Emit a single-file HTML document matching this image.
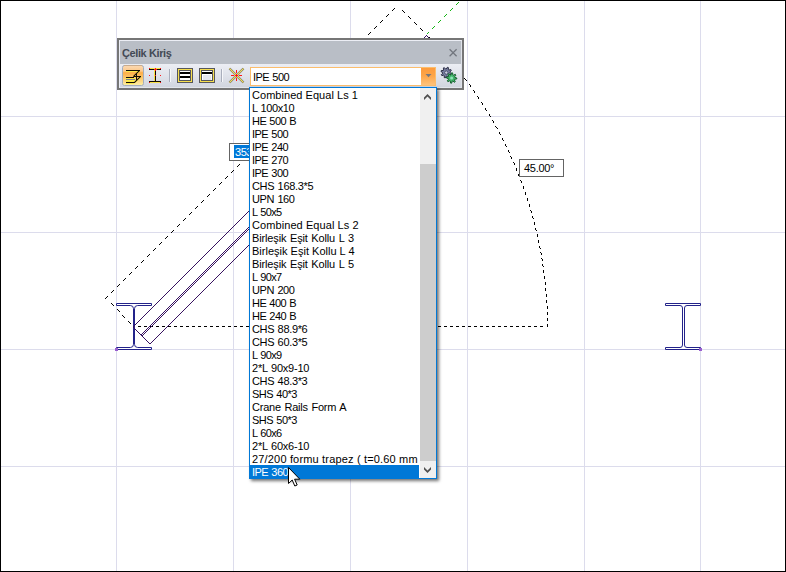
<!DOCTYPE html>
<html><head><meta charset="utf-8"><title>Çelik Kiriş</title>
<style>
html,body{margin:0;padding:0;background:#fff;}
body{width:786px;height:572px;position:relative;overflow:hidden;font-family:"Liberation Sans",sans-serif;font-size:11px;color:#000;}
.cv{position:absolute;left:0;top:0;}
.frame{position:absolute;left:0;top:0;width:784px;height:570px;border:1px solid #000;pointer-events:none;}
.lbl{position:absolute;box-sizing:border-box;height:18px;border:1px solid #646464;background:#fff;line-height:16px;white-space:pre;}
.tb{position:absolute;left:117px;top:38px;width:343px;height:48px;border:2px solid #767676;background:#b9bec6;}
.tb .title{position:absolute;left:0;top:0;width:343px;height:24px;background:#b9bec6;}
.tb .title span{position:absolute;left:3px;top:7px;font-weight:bold;color:#444a55;line-height:13px;letter-spacing:-0.4px}
.tb .row{position:absolute;left:0;top:24px;width:343px;height:24px;background:linear-gradient(#eceef4,#dfe2ea 50%,#d0d4de);}
.tb .inner{position:absolute;left:0;top:0;width:341px;height:46px;border:1px solid;border-color:#eceef5 #dfe2e9 #e3e6ec #eceef5;}
.combo{position:absolute;left:250px;top:67px;width:186px;height:19px;box-sizing:border-box;border:1px solid #fbbd6c;background:#fff;}
.combo span{position:absolute;left:2px;top:3px;line-height:13px;letter-spacing:-0.53px;word-spacing:0.7px}
.combo .arr{position:absolute;right:0;top:0;width:14px;height:17px;background:linear-gradient(#fd9b3c,#fda548 45%,#fec27a);}
.list{position:absolute;left:249px;top:87px;width:186px;height:390px;border:1px solid #0078d7;background:#fff;box-shadow:2px 2px 3px rgba(0,0,0,.55);}
.list .it div{height:13px;line-height:15px;padding-left:2px;white-space:pre;width:169px;box-sizing:border-box;overflow:hidden}
.list .it .sel{background:#0078d7;color:#fff;}
.sb{position:absolute;right:0;top:0;width:16px;height:390px;background:#f0f0f0;}
.sb .th{position:absolute;left:0;top:76px;width:16px;height:297px;background:#cdcdcd;}
</style></head><body>
<svg class="cv" width="786" height="572" viewBox="0 0 786 572"><g fill="#dcdcec"><rect x="116" y="0" width="1" height="572"/><rect x="233" y="0" width="1" height="572"/><rect x="350" y="0" width="1" height="572"/><rect x="467" y="0" width="1" height="572"/><rect x="584" y="0" width="1" height="572"/><rect x="700" y="0" width="1" height="572"/><rect x="0" y="116" width="786" height="1"/><rect x="0" y="232" width="786" height="1"/><rect x="0" y="349" width="786" height="1"/><rect x="0" y="466" width="786" height="1"/></g><path d="M105 298h1v1h-1zM106 297h1v1h-1zM107 296h1v1h-1zM111 292h1v1h-1zM111 303h1v1h-1zM112 291h1v1h-1zM112 304h1v1h-1zM113 290h1v1h-1zM113 305h1v1h-1zM117 286h1v1h-1zM117 309h1v1h-1zM118 285h1v1h-1zM118 310h1v1h-1zM119 284h1v1h-1zM119 311h1v1h-1zM122 315h1v1h-1zM123 280h1v1h-1zM123 316h1v1h-1zM124 279h1v1h-1zM124 317h1v1h-1zM125 278h1v1h-1zM128 321h1v1h-1zM129 274h1v1h-1zM129 322h1v1h-1zM130 273h1v1h-1zM130 323h1v1h-1zM131 272h1v1h-1zM134 326h1v1h-1zM135 268h1v1h-1zM136 267h1v1h-1zM137 266h1v1h-1zM138 326h3v1h-3zM141 262h1v1h-1zM142 261h1v1h-1zM143 260h1v1h-1zM144 326h3v1h-3zM147 256h1v1h-1zM148 255h1v1h-1zM149 254h1v1h-1zM150 326h3v1h-3zM153 250h1v1h-1zM154 249h1v1h-1zM155 248h1v1h-1zM156 326h3v1h-3zM159 244h1v1h-1zM160 243h1v1h-1zM161 242h1v1h-1zM162 326h3v1h-3zM165 238h1v1h-1zM166 237h1v1h-1zM167 236h1v1h-1zM168 326h3v1h-3zM171 232h1v1h-1zM172 231h1v1h-1zM173 230h1v1h-1zM174 326h3v1h-3zM177 226h1v1h-1zM178 225h1v1h-1zM179 224h1v1h-1zM180 326h3v1h-3zM183 220h1v1h-1zM184 219h1v1h-1zM185 218h1v1h-1zM186 326h3v1h-3zM189 214h1v1h-1zM190 213h1v1h-1zM191 212h1v1h-1zM192 326h3v1h-3zM195 208h1v1h-1zM196 207h1v1h-1zM197 206h1v1h-1zM198 326h3v1h-3zM201 202h1v1h-1zM202 201h1v1h-1zM203 200h1v1h-1zM204 326h3v1h-3zM207 196h1v1h-1zM208 195h1v1h-1zM209 194h1v1h-1zM210 326h3v1h-3zM213 190h1v1h-1zM214 189h1v1h-1zM215 188h1v1h-1zM216 326h3v1h-3zM219 184h1v1h-1zM220 183h1v1h-1zM221 182h1v1h-1zM222 326h3v1h-3zM225 178h1v1h-1zM226 177h1v1h-1zM227 176h1v1h-1zM228 326h3v1h-3zM231 172h1v1h-1zM232 171h1v1h-1zM233 170h1v1h-1zM234 326h3v1h-3zM237 166h1v1h-1zM238 165h1v1h-1zM239 164h1v1h-1zM240 326h3v1h-3zM243 160h1v1h-1zM244 159h1v1h-1zM245 158h1v1h-1zM246 326h3v1h-3zM249 154h1v1h-1zM250 153h1v1h-1zM251 152h1v1h-1zM252 326h3v1h-3zM255 148h1v1h-1zM256 147h1v1h-1zM257 146h1v1h-1zM258 326h3v1h-3zM261 142h1v1h-1zM262 141h1v1h-1zM263 140h1v1h-1zM264 326h3v1h-3zM267 136h1v1h-1zM268 135h1v1h-1zM269 134h1v1h-1zM270 326h3v1h-3zM273 130h1v1h-1zM274 129h1v1h-1zM275 128h1v1h-1zM276 326h3v1h-3zM279 124h1v1h-1zM280 123h1v1h-1zM281 122h1v1h-1zM282 326h3v1h-3zM285 118h1v1h-1zM286 117h1v1h-1zM287 116h1v1h-1zM288 326h3v1h-3zM291 112h1v1h-1zM292 111h1v1h-1zM293 110h1v1h-1zM294 326h3v1h-3zM297 106h1v1h-1zM298 105h1v1h-1zM299 104h1v1h-1zM300 326h3v1h-3zM302 100h1v1h-1zM303 99h1v1h-1zM304 98h1v1h-1zM306 326h3v1h-3zM308 94h1v1h-1zM309 93h1v1h-1zM310 92h1v1h-1zM312 326h3v1h-3zM314 88h1v1h-1zM315 87h1v1h-1zM316 86h1v1h-1zM318 326h3v1h-3zM320 82h1v1h-1zM321 81h1v1h-1zM322 80h1v1h-1zM324 326h3v1h-3zM326 76h1v1h-1zM327 75h1v1h-1zM328 74h1v1h-1zM330 326h3v1h-3zM332 70h1v1h-1zM333 69h1v1h-1zM334 68h1v1h-1zM336 326h3v1h-3zM338 64h1v1h-1zM339 63h1v1h-1zM340 62h1v1h-1zM342 326h3v1h-3zM344 58h1v1h-1zM345 57h1v1h-1zM346 56h1v1h-1zM348 326h3v1h-3zM350 52h1v1h-1zM351 51h1v1h-1zM352 50h1v1h-1zM354 326h3v1h-3zM356 46h1v1h-1zM357 45h1v1h-1zM358 44h1v1h-1zM360 326h3v1h-3zM362 40h1v1h-1zM363 39h1v1h-1zM364 38h1v1h-1zM366 326h3v1h-3zM368 34h1v1h-1zM369 33h1v1h-1zM370 32h1v1h-1zM372 326h3v1h-3zM374 28h1v1h-1zM375 27h1v1h-1zM376 26h1v1h-1zM378 326h3v1h-3zM380 22h1v1h-1zM381 21h1v1h-1zM382 20h1v1h-1zM384 326h3v1h-3zM386 16h1v1h-1zM387 15h1v1h-1zM388 14h1v1h-1zM390 326h3v1h-3zM392 10h1v1h-1zM393 9h1v1h-1zM394 8h1v1h-1zM396 326h3v1h-3zM402 10h1v1h-1zM402 326h3v1h-3zM403 11h1v1h-1zM404 12h1v1h-1zM408 16h1v1h-1zM408 326h3v1h-3zM409 17h1v1h-1zM410 18h1v1h-1zM414 22h1v1h-1zM414 326h3v1h-3zM415 23h1v1h-1zM416 24h1v1h-1zM420 28h1v1h-1zM420 326h3v1h-3zM421 29h1v1h-1zM422 30h1v1h-1zM426 326h3v1h-3zM429 37h1v1h-1zM430 38h1v1h-1zM432 326h3v1h-3zM434 42h1v1h-1zM435 43h1v1h-1zM436 44h1v1h-1zM438 326h3v1h-3zM440 48h1v1h-1zM441 49h1v2h-1zM444 326h3v1h-3zM445 54h1v1h-1zM446 55h1v1h-1zM447 56h1v1h-1zM450 60h1v1h-1zM450 326h3v1h-3zM451 61h1v1h-1zM452 62h1v1h-1zM455 66h1v1h-1zM456 67h1v1h-1zM456 326h3v1h-3zM457 68h1v1h-1zM460 72h1v1h-1zM461 73h1v2h-1zM462 326h3v1h-3zM464 78h1v1h-1zM465 79h1v1h-1zM466 80h1v1h-1zM468 326h3v1h-3zM469 84h1v1h-1zM470 85h1v2h-1zM473 90h1v1h-1zM474 91h1v2h-1zM474 326h3v1h-3zM477 96h1v1h-1zM478 97h1v2h-1zM480 326h3v1h-3zM481 102h1v1h-1zM482 103h1v2h-1zM485 108h1v2h-1zM486 110h1v1h-1zM486 326h3v1h-3zM489 114h1v2h-1zM490 116h1v1h-1zM492 120h1v1h-1zM492 326h3v1h-3zM493 121h1v2h-1zM495 126h1v1h-1zM496 127h1v1h-1zM497 128h1v1h-1zM498 326h3v1h-3zM499 132h1v2h-1zM500 134h1v1h-1zM502 138h1v2h-1zM503 140h1v1h-1zM504 326h3v1h-3zM505 144h1v2h-1zM506 146h1v1h-1zM508 150h1v2h-1zM509 152h1v1h-1zM510 156h1v1h-1zM510 326h3v1h-3zM511 157h1v2h-1zM513 162h1v1h-1zM514 163h1v2h-1zM516 168h1v3h-1zM516 326h3v1h-3zM518 174h1v2h-1zM519 176h1v1h-1zM520 180h1v1h-1zM521 181h1v2h-1zM522 326h3v1h-3zM523 186h1v3h-1zM525 192h1v3h-1zM527 198h1v3h-1zM528 326h3v1h-3zM529 204h1v3h-1zM530 210h1v1h-1zM531 211h1v2h-1zM532 216h1v2h-1zM533 218h1v1h-1zM534 222h1v3h-1zM534 326h3v1h-3zM535 228h1v2h-1zM536 230h1v1h-1zM537 234h1v3h-1zM538 240h1v3h-1zM539 246h1v2h-1zM540 248h1v1h-1zM540 252h1v1h-1zM540 326h3v1h-3zM541 253h1v2h-1zM541 258h1v1h-1zM542 259h1v2h-1zM542 264h1v2h-1zM543 266h1v1h-1zM543 270h1v3h-1zM544 276h1v3h-1zM545 282h1v3h-1zM545 288h1v3h-1zM546 294h1v3h-1zM546 300h1v3h-1zM547 306h1v3h-1zM547 312h1v3h-1zM547 318h1v3h-1zM547 324h1v3h-1z" fill="#000" shape-rendering="crispEdges"/><path d="M427 33h1v1h-1zM428 32h1v1h-1zM432 28h1v1h-1zM433 27h1v1h-1zM434 26h1v1h-1zM438 22h1v1h-1zM439 21h1v1h-1zM440 20h1v1h-1zM444 16h1v1h-1zM445 15h1v1h-1zM446 14h1v1h-1zM450 10h1v1h-1zM451 9h1v1h-1zM452 8h1v1h-1zM456 4h1v1h-1zM457 3h1v1h-1zM458 2h1v1h-1z" fill="#14b414" shape-rendering="crispEdges"/><path d="M116.5 303.5 H151.5 V305.5 H137.7 Q134.5 305.5 134.5 308.7 V344.3 Q134.5 347.5 137.7 347.5 H151.5 V349.5 H116.5 V347.5 H130.3 Q133.5 347.5 133.5 344.3 V308.7 Q133.5 305.5 130.3 305.5 H116.5 Z" fill="#fff" stroke="#23238a" stroke-width="1"/><path d="M665.5 303.5 H700.5 V305.5 H687.0 Q684.5 305.5 684.5 308.0 V345.0 Q684.5 347.5 687.0 347.5 H700.5 V349.5 H665.5 V347.5 H680.0 Q682.5 347.5 682.5 345.0 V308.0 Q682.5 305.5 680.0 305.5 H665.5 Z" fill="#fff" stroke="#23238a" stroke-width="1"/><rect x="115" y="348" width="3" height="3" fill="#9a5fd0"/><rect x="699" y="348" width="3" height="3" fill="#9a5fd0"/><g fill="none" stroke="#35105c" stroke-width="0.7" shape-rendering="crispEdges"><path d="M133.5 326.5 L300.5 159.5 M301.5 159.5 L426.5 34.5 M150.5 343.5 L317.5 176.5 M318.5 176.5 L443.5 51.5 M141.5 334.5 L308.5 167.5 M309.5 167.5 L434.5 42.5 M142.5 335.5 L309.5 168.5 M310.5 168.5 L435.5 43.5 M133.50 326.50 L150.50 343.50 M426.50 34.50 L443.50 51.50"/><path d="M133.5 326.5 L300.5 159.5 M301.5 159.5 L426.5 34.5 M150.5 343.5 L317.5 176.5 M318.5 176.5 L443.5 51.5 M141.5 334.5 L308.5 167.5 M309.5 167.5 L434.5 42.5 M142.5 335.5 L309.5 168.5 M310.5 168.5 L435.5 43.5 M133.50 326.50 L150.50 343.50 M426.50 34.50 L443.50 51.50"/><path d="M133.5 326.5 L300.5 159.5 M301.5 159.5 L426.5 34.5 M150.5 343.5 L317.5 176.5 M318.5 176.5 L443.5 51.5 M141.5 334.5 L308.5 167.5 M309.5 167.5 L434.5 42.5 M142.5 335.5 L309.5 168.5 M310.5 168.5 L435.5 43.5 M133.50 326.50 L150.50 343.50 M426.50 34.50 L443.50 51.50"/><path d="M133.5 326.5 L300.5 159.5 M301.5 159.5 L426.5 34.5 M150.5 343.5 L317.5 176.5 M318.5 176.5 L443.5 51.5 M141.5 334.5 L308.5 167.5 M309.5 167.5 L434.5 42.5 M142.5 335.5 L309.5 168.5 M310.5 168.5 L435.5 43.5 M133.50 326.50 L150.50 343.50 M426.50 34.50 L443.50 51.50"/></g></svg>
<div class="lbl" style="left:229px;top:143px;width:40px;"><span style="position:absolute;left:4px;top:1px;height:13px;line-height:15px;background:#0078d7;color:#fff;padding:0 1px;letter-spacing:-0.45px">353.55</span></div>
<div class="lbl" style="left:519px;top:159px;width:45px;"><span style="position:absolute;left:4px;top:0px;letter-spacing:-0.3px">45.00°</span></div>
<div class="tb">
 <div class="title"><span>Çelik Kiriş</span>
 <svg style="position:absolute;left:328px;top:7px" width="12" height="12" viewBox="0 0 12 12"><path d="M2.6 2.2 L9.6 9.2 M9.6 2.2 L2.6 9.2" stroke="#72767e" stroke-width="1.25" fill="none"/></svg>
 </div>
 <div class="row"></div><div class="inner"></div>
</div>
<svg style="position:absolute;left:119px;top:64px" width="343" height="24" viewBox="119 64 343 24"><defs><linearGradient id="ab" x1="0" y1="0" x2="0" y2="1"><stop offset="0" stop-color="#fbdab4"/><stop offset="0.28" stop-color="#fcc88c"/><stop offset="0.36" stop-color="#fdae48"/><stop offset="0.6" stop-color="#fdc468"/><stop offset="1" stop-color="#fdf0a8"/></linearGradient></defs><rect x="122.5" y="65.5" width="21" height="20" rx="2" fill="url(#ab)" stroke="#a3adbd"/><path d="M124 65.5H142" stroke="#c7ab8e" fill="none"/><g fill="none" stroke="#fbe84a" stroke-width="1"><path d="M126 71.5H138 M126 78.5H136 M126 80.5H135 M126 81.5H134 M126 83.5H134 M139.5 71.5L134 77 M140.5 77.5L135 83" shape-rendering="crispEdges"/></g><g fill="none" stroke="#7d8494" stroke-width="1" shape-rendering="crispEdges"><path d="M126 79.5H135"/></g><g fill="none" stroke="#120c04" stroke-width="1"><path d="M126 70.5H140 M126 77.5H134 M134 76.5H141 M126 82.5H135 M136.5 74V80" shape-rendering="crispEdges"/><path d="M139.7 70.3L133.3 76.7 M140.7 76.3L134.3 82.7" stroke-width="1.1"/></g><g shape-rendering="crispEdges"><rect x="149" y="68" width="12" height="1" fill="#f7e24a"/><rect x="149" y="82" width="12" height="1" fill="#f7e24a"/><rect x="154" y="70" width="1" height="11" fill="#f7e24a"/><rect x="149" y="69" width="12" height="1" fill="#120c04"/><rect x="149" y="81" width="12" height="1" fill="#120c04"/><rect x="155" y="69" width="1" height="13" fill="#120c04"/><rect x="149" y="68" width="1" height="1" fill="#ff1a1a"/><rect x="160" y="68" width="1" height="1" fill="#ff1a1a"/><rect x="149" y="75" width="1" height="1" fill="#ff1a1a"/><rect x="155" y="75" width="1" height="1" fill="#ff1a1a"/><rect x="160" y="75" width="1" height="1" fill="#ff1a1a"/><rect x="149" y="82" width="1" height="1" fill="#ff1a1a"/><rect x="160" y="82" width="1" height="1" fill="#ff1a1a"/><rect x="154" y="69" width="3" height="1" fill="#ff1a1a"/><rect x="155" y="68" width="1" height="3" fill="#ff1a1a"/></g><rect x="169" y="69" width="1" height="13" fill="#a9aebc"/><rect x="170" y="69" width="1" height="13" fill="#f6f7fa"/><rect x="221" y="69" width="1" height="13" fill="#a9aebc"/><rect x="222" y="69" width="1" height="13" fill="#f6f7fa"/><g shape-rendering="crispEdges"><rect x="177.5" y="68.5" width="15" height="14" fill="#f7df4e" stroke="#56575c"/><rect x="179.5" y="70.5" width="11" height="10" fill="#fff" stroke="#56575c"/><rect x="180" y="72" width="10" height="2" fill="#000"/><rect x="180" y="76" width="10" height="2" fill="#000"/><rect x="199.5" y="68.5" width="15" height="14" fill="#f7df4e" stroke="#56575c"/><rect x="201.5" y="70.5" width="11" height="10" fill="#fff" stroke="#56575c"/><rect x="202" y="72" width="10" height="2" fill="#000"/><rect x="203" y="75" width="8" height="5" fill="#e4e6ee"/></g><g fill="none"><path d="M229.5 68.5 L243.5 82.5 M243.5 68.5 L229.5 82.5" stroke="#5e6070" stroke-width="2.3"/><path d="M229.5 68.5 L243.5 82.5 M243.5 68.5 L229.5 82.5" stroke="#f5df55" stroke-width="1.1"/><g fill="#ff1414" shape-rendering="crispEdges"><rect x="231" y="75" width="3" height="1"/><rect x="235" y="75" width="3" height="1"/><rect x="239" y="75" width="3" height="1"/><rect x="236" y="70" width="1" height="3"/><rect x="236" y="74" width="1" height="3"/><rect x="236" y="78" width="1" height="3"/></g></g><path d="M451.59 73.67 L451.28 74.68 L449.29 74.61 L448.84 75.15 L449.28 77.10 L448.35 77.60 L446.99 76.13 L446.29 76.20 L445.23 77.89 L444.22 77.58 L444.29 75.59 L443.75 75.14 L441.80 75.58 L441.30 74.65 L442.77 73.29 L442.70 72.59 L441.01 71.53 L441.32 70.52 L443.31 70.59 L443.76 70.05 L443.32 68.10 L444.25 67.60 L445.61 69.07 L446.31 69.00 L447.37 67.31 L448.38 67.62 L448.31 69.61 L448.85 70.06 L450.80 69.62 L451.30 70.55 L449.83 71.91 L449.90 72.61 Z" fill="#7c82a6" stroke="#26283f" stroke-width="1"/><circle cx="446.3" cy="72.6" r="1.7" fill="#c9cde0" stroke="#3a3d5c" stroke-width="0.8"/><path d="M456.80 78.00 L456.70 79.01 L454.65 79.26 L454.34 79.83 L455.28 81.68 L454.49 82.32 L452.86 81.05 L452.24 81.24 L451.60 83.20 L450.59 83.10 L450.34 81.05 L449.77 80.74 L447.92 81.68 L447.28 80.89 L448.55 79.26 L448.36 78.64 L446.40 78.00 L446.50 76.99 L448.55 76.74 L448.86 76.17 L447.92 74.32 L448.71 73.68 L450.34 74.95 L450.96 74.76 L451.60 72.80 L452.61 72.90 L452.86 74.95 L453.43 75.26 L455.28 74.32 L455.92 75.11 L454.65 76.74 L454.84 77.36 Z" fill="#43b56a" stroke="#17602f" stroke-width="1"/><circle cx="451.6" cy="78" r="1.5" fill="#8fe3b9"/></svg>
<div class="combo"><span>IPE 500</span><div class="arr"><svg width="14" height="17" viewBox="0 0 14 17" style="position:absolute;left:0;top:0"><path d="M4.5 6 H10.5 L7.5 9.2 Z" fill="#77787f"/></svg></div></div>
<div class="list"><div class="it"><div style="letter-spacing:0.04px;word-spacing:0.0px">Combined Equal Ls 1</div><div style="letter-spacing:-0.43px;word-spacing:0.7px">L 100x10</div><div style="letter-spacing:-0.56px;word-spacing:0.7px">HE 500 B</div><div style="letter-spacing:-0.54px;word-spacing:0.7px">IPE 500</div><div style="letter-spacing:-0.54px;word-spacing:0.7px">IPE 240</div><div style="letter-spacing:-0.54px;word-spacing:0.7px">IPE 270</div><div style="letter-spacing:-0.54px;word-spacing:0.7px">IPE 300</div><div style="letter-spacing:-0.34px;word-spacing:0.7px">CHS 168.3*5</div><div style="letter-spacing:-0.4px;word-spacing:0.7px">UPN 160</div><div style="letter-spacing:-0.62px;word-spacing:0.7px">L 50x5</div><div style="letter-spacing:0.08px;word-spacing:0.0px">Combined Equal Ls 2</div><div style="letter-spacing:-0.14px;word-spacing:0.7px">Birleşik Eşit Kollu L 3</div><div style="letter-spacing:0.01px;word-spacing:0.0px">Birleşik Eşit Kollu L 4</div><div style="letter-spacing:-0.14px;word-spacing:0.7px">Birleşik Eşit Kollu L 5</div><div style="letter-spacing:-0.62px;word-spacing:0.7px">L 90x7</div><div style="letter-spacing:-0.4px;word-spacing:0.7px">UPN 200</div><div style="letter-spacing:-0.56px;word-spacing:0.7px">HE 400 B</div><div style="letter-spacing:-0.56px;word-spacing:0.7px">HE 240 B</div><div style="letter-spacing:-0.34px;word-spacing:0.7px">CHS 88.9*6</div><div style="letter-spacing:-0.34px;word-spacing:0.7px">CHS 60.3*5</div><div style="letter-spacing:-0.62px;word-spacing:0.7px">L 90x9</div><div style="letter-spacing:-0.22px;word-spacing:0.7px">2*L 90x9-10</div><div style="letter-spacing:-0.34px;word-spacing:0.7px">CHS 48.3*3</div><div style="letter-spacing:-0.51px;word-spacing:0.7px">SHS 40*3</div><div style="letter-spacing:-0.21px;word-spacing:0.7px">Crane Rails Form A</div><div style="letter-spacing:-0.51px;word-spacing:0.7px">SHS 50*3</div><div style="letter-spacing:-0.62px;word-spacing:0.7px">L 60x6</div><div style="letter-spacing:-0.22px;word-spacing:0.7px">2*L 60x6-10</div><div style="letter-spacing:0.17px;word-spacing:0.0px">27/200 formu trapez ( t=0.60 mm</div><div class="sel" style="letter-spacing:-0.54px;word-spacing:0.7px">IPE 360</div></div>
<div class="sb"><div class="th"></div>
<svg width="16" height="390" viewBox="0 0 16 390" style="position:absolute;left:0;top:0"><path d="M4 9.5 L7.5 6 L11 9.5 V12 L7.5 8.5 L4 12 Z M4 381.5 L7.5 385 L11 381.5 V379 L7.5 382.5 L4 379 Z" fill="#505050"/></svg>
</div></div>
<svg style="position:absolute;left:287px;top:466px" width="14" height="22" viewBox="0 0 14 22"><path d="M1.5 1.5 V17.5 L5.2 14 L7.8 20 L10.2 19 L7.6 13.2 H12.8 Z" fill="#fff" stroke="#000" stroke-width="1" stroke-linejoin="miter"/></svg>
<div class="frame"></div>
</body></html>
